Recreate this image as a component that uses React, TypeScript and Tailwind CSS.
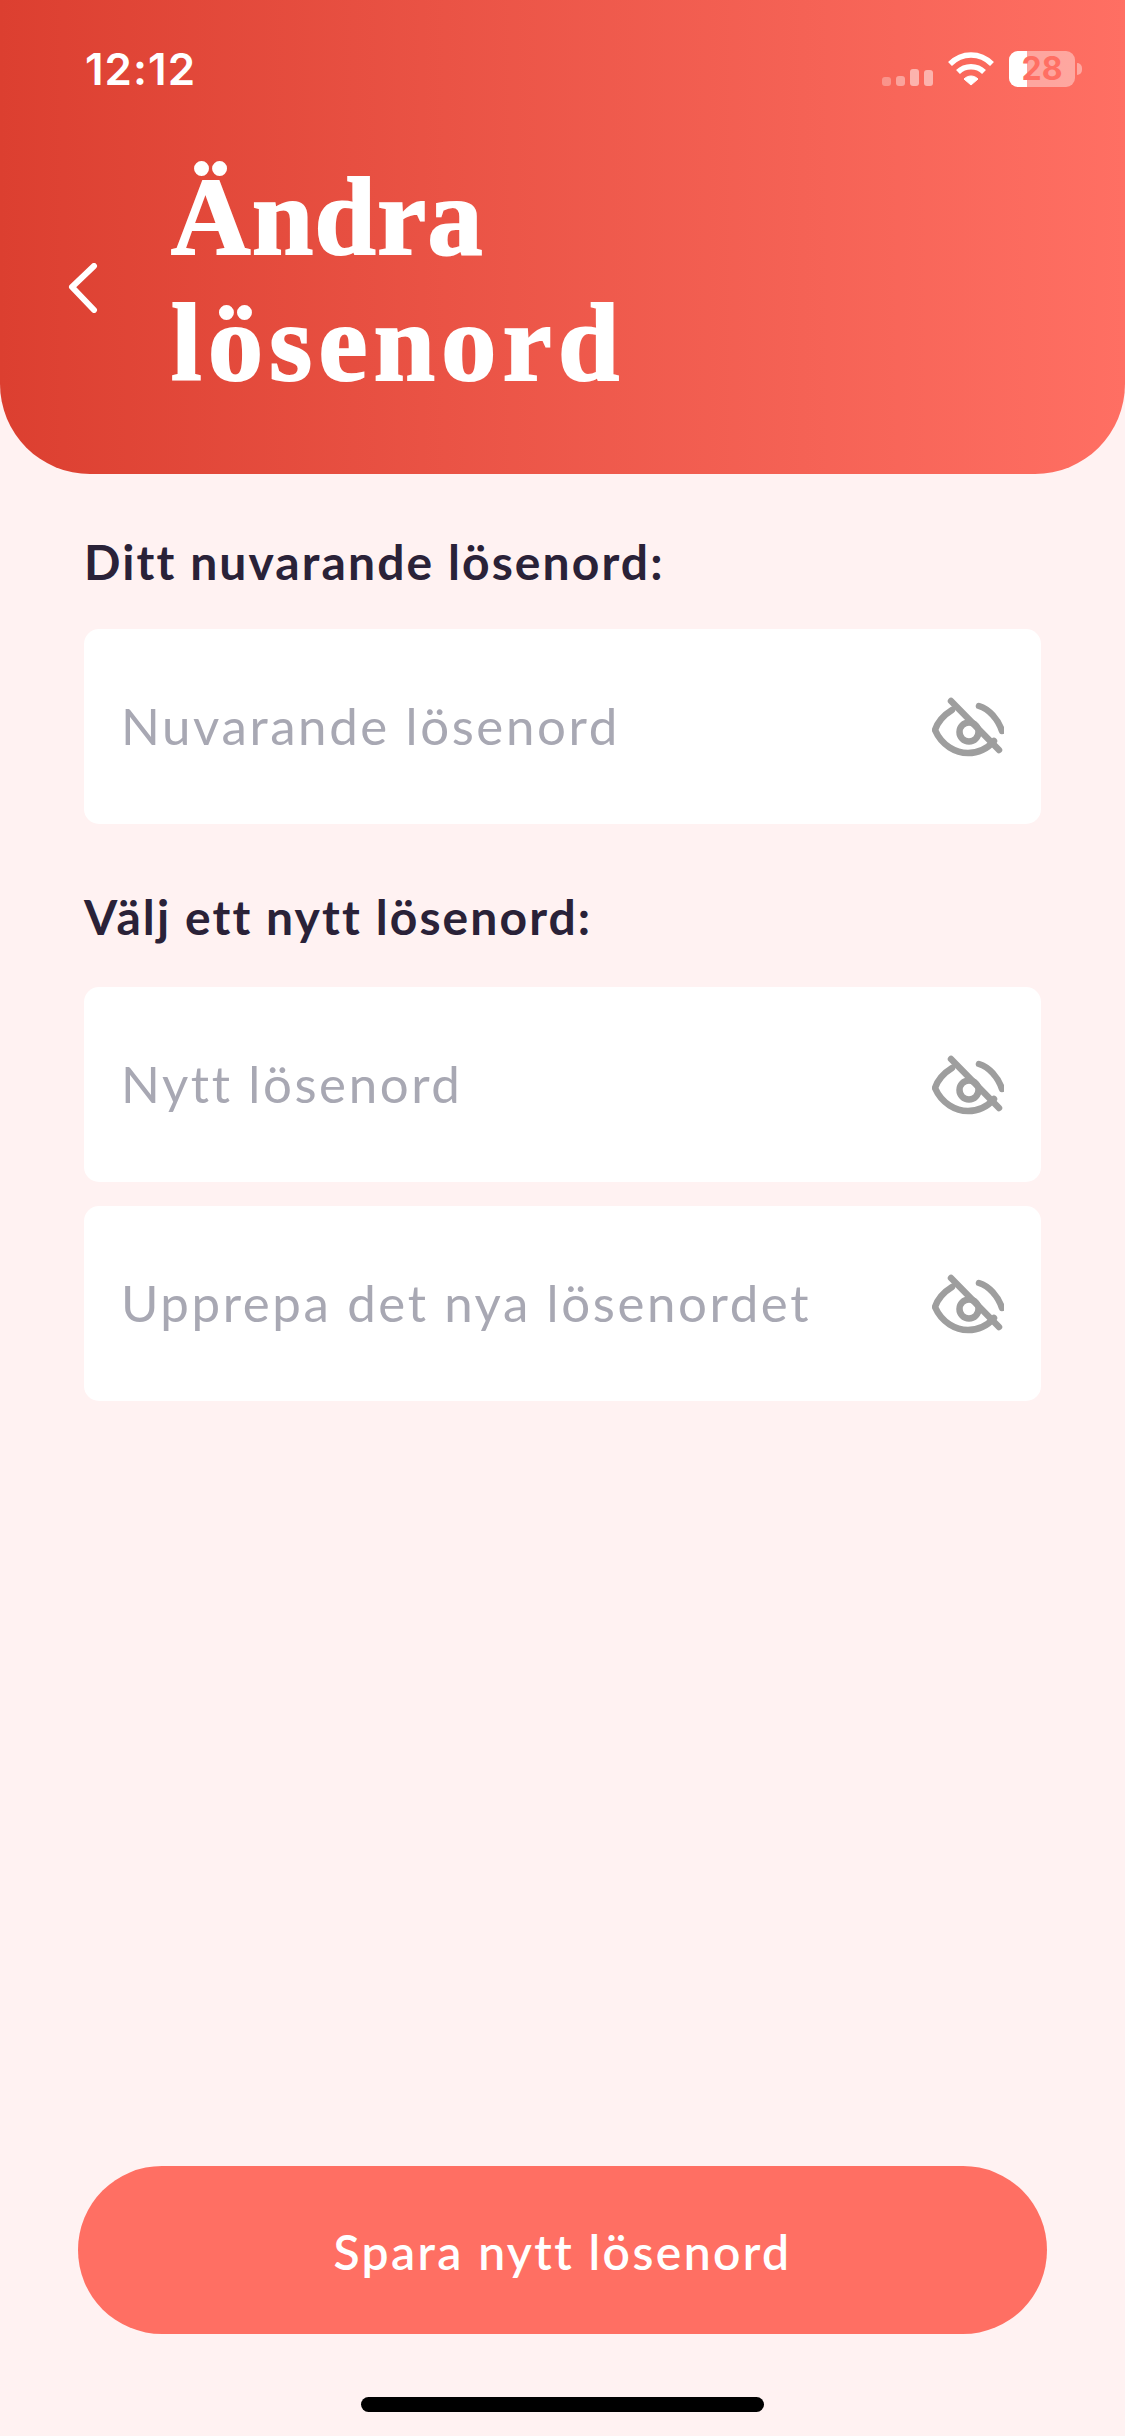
import React from 'react';

const EyeOff: React.FC = () => (
  <svg width="72" height="62" viewBox="0 0 72 62" fill="none" stroke="#9e9e9e" strokeWidth="6.5" strokeLinecap="round" strokeLinejoin="round" className="mt-[-2px]">
    <path d="M20 15 Q7 23 3 35 C10 51 24 58 36 58 C46 58 55 54 62 46" />
    <path d="M47 11 C57 14 66 24 70 36" />
    <path d="M19 6 L67 55" />
    <circle cx="37" cy="37" r="9.5" />
  </svg>
);

const Field: React.FC<{ placeholder: string }> = ({ placeholder }) => (
  <div className="flex h-[195px] w-full items-center justify-between rounded-[15px] bg-white px-[37px]">
    <span className="text-[51px] tracking-[2.6px] text-[#a8a8b3]">{placeholder}</span>
    <EyeOff />
  </div>
);

export default function App() {
  return (
    <div className="flex h-[2436px] w-[1125px] flex-col bg-[#fff2f2] font-['Lato','Noto_Sans',sans-serif]">
      {/* Header */}
      <div className="flex h-[474px] flex-col rounded-b-[90px] bg-gradient-to-r from-[#dc3f30] to-[#ff6f63] pl-[85px] pr-[43px] text-white">
        <div className="mt-[34px] flex h-[70px] items-center justify-between">
          <span className="font-['Inter',sans-serif] text-[44px] font-semibold tracking-[1px]">12:12</span>
          <div className="flex items-center">
            <svg width="52" height="17" viewBox="0 0 52 17" fill="#ffffff" className="mt-[16px]">
              <rect x="0" y="8" width="9" height="9" rx="3" opacity="0.3" />
              <rect x="14" y="7" width="9" height="10" rx="3" opacity="0.4" />
              <rect x="28" y="0" width="9" height="17" rx="3" opacity="0.5" />
              <rect x="42" y="1" width="9" height="16" rx="3" opacity="0.5" />
            </svg>
            <svg width="46" height="34" viewBox="0 0 46 34" fill="none" stroke="#ffffff" strokeWidth="5.5" className="ml-[14px]">
              <path d="M2 12 C14 0 32 0 44 12" />
              <path d="M10 20 C17 13 29 13 36 20" />
              <path d="M16 27 L23 33 L30 27 C26 23 20 23 16 27 Z" fill="#ffffff" strokeWidth="1" />
            </svg>
            <div className="ml-[15px] flex items-center">
              <div className="relative flex h-[36px] w-[66px] items-center justify-center rounded-[9px] bg-white/40">
                <div className="absolute bottom-0 left-0 top-0 w-[18px] rounded-l-[9px] bg-white" />
                <span className="relative font-['Inter',sans-serif] text-[32px] font-bold leading-none text-[#ff6f63]">28</span>
              </div>
              <div className="ml-[2px] h-[12px] w-[5px] rounded-r-full bg-white/40" />
            </div>
          </div>
        </div>
        <div className="mt-[50px] flex items-center">
          <svg width="30" height="50" viewBox="0 0 30 50" fill="none" stroke="#ffffff" strokeWidth="6" strokeLinecap="round" strokeLinejoin="round" className="ml-[-17px] mt-[16px]">
            <path d="M26 3 L4 24 L26 47" />
          </svg>
          <h1 className="ml-[73px] font-['Liberation_Serif',serif] text-[110px] font-bold leading-[126px] [-webkit-text-stroke:2px_white]">
            <span className="block tracking-[1.5px]">Ändra</span>
            <span className="block tracking-[6.4px]">lösenord</span>
          </h1>
        </div>
      </div>

      {/* Form */}
      <div className="flex flex-1 flex-col px-[84px]">
        <p className="mt-[59px] text-[48px] font-bold leading-[58px] tracking-[2.1px] text-[#2a2238]">Ditt nuvarande lösenord:</p>
        <div className="mt-[38px]">
          <Field placeholder="Nuvarande lösenord" />
        </div>
        <p className="mt-[64px] text-[48px] font-bold leading-[58px] tracking-[2.1px] text-[#2a2238]">Välj ett nytt lösenord:</p>
        <div className="mt-[41px] flex flex-col gap-[24px]">
          <Field placeholder="Nytt lösenord" />
          <Field placeholder="Upprepa det nya lösenordet" />
        </div>
      </div>

      {/* Footer */}
      <div className="flex flex-col items-center px-[78px]">
        <button className="h-[168px] w-full rounded-[84px] bg-[#ff6f63] pt-[4px] text-[48px] font-semibold tracking-[2.4px] text-white">
          Spara nytt lösenord
        </button>
        <div className="mb-[24px] mt-[63px] h-[15px] w-[403px] rounded-full bg-black" />
      </div>
    </div>
  );
}
